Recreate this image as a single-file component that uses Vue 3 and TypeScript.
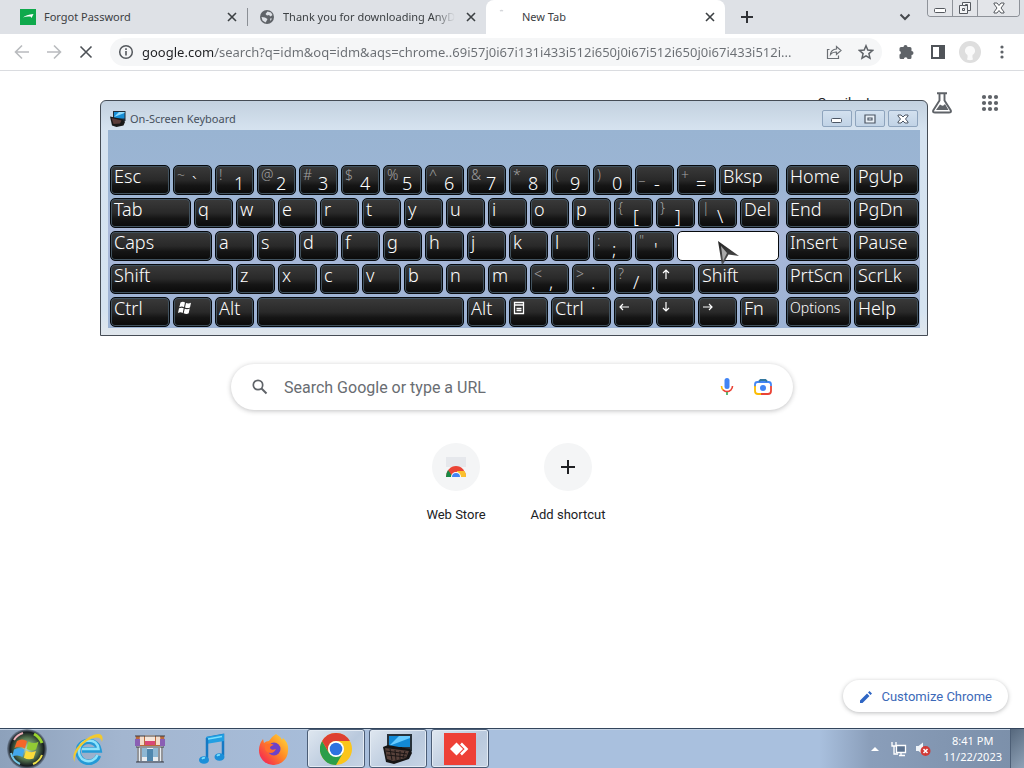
<script setup lang="ts">
import { ref } from 'vue'

interface Key {
  label: string
  span: number
  shifted?: string
  icon?: 'win' | 'menu' | 'up' | 'down' | 'left' | 'right'
  pressed?: boolean
}

const k = (label: string, span = 2): Key => ({ label, span })
const dual = (shifted: string, label: string): Key => ({ label, shifted, span: 2 })
const letters = (s: string): Key[] => s.split('').map((c) => k(c))

const keys: Key[] = [
  k('Esc', 3),
  dual('~', '`'), dual('!', '1'), dual('@', '2'), dual('#', '3'), dual('$', '4'), dual('%', '5'),
  dual('^', '6'), dual('&', '7'), dual('*', '8'), dual('(', '9'), dual(')', '0'), dual('_', '-'), dual('+', '='),
  k('Bksp', 3),
  k('Tab', 4), ...letters('qwertyuiop'), dual('{', '['), dual('}', ']'), dual('|', '\\'), k('Del'),
  k('Caps', 5), ...letters('asdfghjkl'), dual(':', ';'), dual('"', "'"),
  { label: 'Enter', span: 5, pressed: true },
  k('Shift', 6), ...letters('zxcvbnm'), dual('<', ','), dual('>', '.'), dual('?', '/'),
  { label: 'Up', span: 2, icon: 'up' }, k('Shift', 4),
  k('Ctrl', 3), { label: 'Windows', span: 2, icon: 'win' }, k('Alt'), k('', 10), k('Alt'),
  { label: 'Menu', span: 2, icon: 'menu' }, k('Ctrl', 3),
  { label: 'Left', span: 2, icon: 'left' }, { label: 'Down', span: 2, icon: 'down' },
  { label: 'Right', span: 2, icon: 'right' }, k('Fn'),
]
const navKeys = ['Home', 'PgUp', 'End', 'PgDn', 'Insert', 'Pause', 'PrtScn', 'ScrLk', 'Options', 'Help']
const arrows: Record<string, string> = {
  up: 'M6 11V2M3 5l3-3 3 3',
  down: 'M6 1v9M3 7l3 3 3-3',
  left: 'M11 6H2M5 3L2 6l3 3',
  right: 'M1 6h9M7 3l3 3-3 3',
}

const url = ref('google.com/search?q=idm&oq=idm&aqs=chrome..69i57j0i67i131i433i512i650j0i67i512i650j0i67i433i512i...')
const query = ref('')
const dots = [3, 9, 15]
</script>

<template>
  <div class="desktop">
    <div class="browser">
      <header class="tabstrip">
        <div class="tab">
          <svg class="fav" viewBox="0 0 16 16"><rect width="16" height="16" fill="#0fa94c" /><path d="M3 8.500Q6 5.500 13.500 5L11.500 9 10.500 7.500Q6 7 3 8.500Z" fill="#fff" /></svg>
          <span class="tab-title">Forgot Password</span>
          <button class="tab-close" aria-label="Close tab"><svg viewBox="0 0 10 10"><path d="M1 1l8 8M9 1L1 9" /></svg></button>
        </div>
        <div class="tab sep">
          <svg class="fav" viewBox="0 0 16 16"><circle cx="8" cy="8" r="7" fill="#5f6368" /><path d="M8.500 2.500L12 3.500 13.500 6 11.500 7.500 10 6 8 6.500 6.500 5ZM2.500 8L6 8.500 8.500 10 7.500 12 6.500 13.500 3.500 11.500ZM11 9.500l2 0-1.500 2.500Z" fill="#dee1e6" /></svg>
          <span class="tab-title fade">Thank you for downloading AnyD</span>
          <button class="tab-close" aria-label="Close tab"><svg viewBox="0 0 10 10"><path d="M1 1l8 8M9 1L1 9" /></svg></button>
        </div>
        <div class="tab active">
          <svg class="fav" viewBox="0 0 16 16"><path d="M2 2q1.500-1 3 0" fill="none" stroke="#d4d6da" stroke-width="1.500" /></svg>
          <span class="tab-title">New Tab</span>
          <button class="tab-close" aria-label="Close tab"><svg viewBox="0 0 10 10"><path d="M1 1l8 8M9 1L1 9" /></svg></button>
        </div>
        <button class="plain newtab" aria-label="New tab"><svg width="12" height="12" viewBox="0 0 12 12"><path d="M6 0v12M0 6h12" stroke="#303236" stroke-width="2" /></svg></button>
        <button class="plain chevron" aria-label="Search tabs"><svg width="12" height="8" viewBox="0 0 12 8"><path d="M1.500 1.500L6 6l4.500-4.500" fill="none" stroke="#45484c" stroke-width="2" /></svg></button>
        <div class="caption">
          <button aria-label="Minimize"><svg width="12" height="14" viewBox="0 0 12 14"><rect x=".5" y="7.500" width="11" height="4" rx="1" fill="#fff" stroke="#55595f" /></svg></button>
          <button aria-label="Restore"><svg width="14" height="14" viewBox="0 0 14 14"><path d="M4.500 1.500h8v8h-3v3h-8v-8h3zM9.500 9.500v-5h-5M4.500 7.500h2v2h-2zM7.500 4v-.5h2v3h-.5" fill="#f4f5f7" stroke="#55595f" /></svg></button>
          <button aria-label="Close"><svg width="12" height="12" viewBox="0 0 12 12"><path d="M1 1h3l2 2.500L8 1h3v1L8 6l3 4v1H8L6 8.500 4 11H1v-1l3-4-3-4z" fill="#fff" stroke="#55595f" /></svg></button>
        </div>
      </header>

      <nav class="toolbar">
        <button class="tool" aria-label="Back"><svg width="16" height="16" viewBox="0 0 16 16"><path d="M15 8H2M8 1.500L1.500 8 8 14.500" stroke="#b9bbbe" /></svg></button>
        <button class="tool" aria-label="Forward"><svg width="16" height="16" viewBox="0 0 16 16"><path d="M1 8h13M8 1.500L14.500 8 8 14.500" stroke="#b9bbbe" /></svg></button>
        <button class="tool" aria-label="Stop"><svg width="16" height="16" viewBox="0 0 16 16"><path d="M2.500 2.500l11 11M13.500 2.500l-11 11" stroke="#4d5156" /></svg></button>
        <div class="omnibox">
          <svg width="16" height="16" viewBox="0 0 16 16"><circle cx="8" cy="8" r="6.300" fill="none" stroke="#54585d" stroke-width="1.500" /><path d="M8 7v4.500M8 4.300v1.600" stroke="#54585d" stroke-width="1.600" /></svg>
          <input v-model="url" class="url" aria-label="Address" type="text" />
          <button class="plain" aria-label="Share"><svg width="16" height="16" viewBox="0 0 16 16"><path d="M3.500 5.500h-2v9h11v-3M4.500 10.500q.5-5 6-5.500V2.500l4.500 4-4.500 4V8q-4-.2-6 2.500z" fill="none" stroke="#6b6f74" stroke-width="1.200" /></svg></button>
          <button class="plain" aria-label="Bookmark"><svg width="16" height="16" viewBox="0 0 16 16"><path d="M8 1.800l1.800 4.300 4.700.4-3.600 3.100 1.100 4.600L8 11.800l-4 2.400 1.100-4.600L1.500 6.500l4.700-.4z" fill="none" stroke="#5f6368" stroke-width="1.500" /></svg></button>
        </div>
        <button class="tool ext" aria-label="Extensions"><svg width="16" height="16" viewBox="0 0 16 16"><path d="M1.500 4.500Q1.500 3 3 3h2.500a2 2 0 014 0H12q1.500 0 1.500 1.500V7a2 2 0 010 4v2.500Q13.500 15 12 15H9.500a1.800 1.800 0 00-3.600 0H3q-1.500 0-1.500-1.500v-3a1.800 1.800 0 000-3.500z" fill="#5f6368" stroke="none" /></svg></button>
        <button class="tool" aria-label="Side panel"><svg width="16" height="16" viewBox="0 0 16 16"><rect x="2" y="2" width="12" height="12" stroke="#505459" stroke-width="2" /><path d="M9 2h5v12H9z" fill="#505459" stroke="none" /></svg></button>
        <button class="tool" aria-label="Profile"><svg width="22" height="22" viewBox="0 0 22 22"><circle cx="11" cy="11" r="11" fill="#dedede" stroke="none" /><path d="M8 18.500q1-2 .5-4.500Q5.500 12 6 9q1-4 5-4t5 4q.5 3-2.500 5-.5 2.500.5 4.500-3 1.500-6 0z" fill="#fafafa" stroke="none" /></svg></button>
        <button class="tool" aria-label="Menu"><svg width="16" height="16" viewBox="0 0 16 16"><g fill="#5f6368" stroke="none"><circle cx="8" cy="3" r="1.600" /><circle cx="8" cy="8" r="1.600" /><circle cx="8" cy="13" r="1.600" /></g></svg></button>
      </nav>

      <main class="page">
        <div class="links">
          <a href="#">Gmail</a>
          <a href="#">Images</a>
          <button class="plain labs" aria-label="Labs"><svg width="20" height="22" viewBox="0 0 20 22"><path d="M5 1.200h10M7.500 1v7.500L1.200 18.500Q.5 20.500 3 20.500h14q2.500 0 1.800-2L12.500 8.500V1" fill="none" stroke="#5f6368" stroke-width="1.900" /><path d="M4 18l4-5.500q3 2.500 5-.5L16.500 18z" fill="#5f6368" /></svg></button>
          <button class="plain apps" aria-label="Google apps"><svg width="18" height="18" viewBox="0 0 18 18"><g fill="#5f6368"><template v-for="y in dots" :key="y"><circle v-for="x in dots" :key="x" :cx="x" :cy="y" r="2.100" /></template></g></svg></button>
        </div>
        <form class="search" @submit.prevent>
          <svg width="18" height="18" viewBox="0 0 18 18"><circle cx="7" cy="7" r="4.700" fill="none" stroke="#5f6368" stroke-width="1.700" /><path d="M10.500 10.500l5 5" stroke="#5f6368" stroke-width="2" /></svg>
          <input v-model="query" type="text" aria-label="Search" placeholder="Search Google or type a URL" />
          <button class="plain" type="button" aria-label="Search by voice"><svg width="14" height="20" viewBox="0 0 14 20"><rect x="4.500" y="1" width="5" height="11" rx="2.500" fill="#4285f4" /><path d="M1.500 9q0 2.500 1.700 4" fill="none" stroke="#fbbc04" stroke-width="1.600" /><path d="M3 12.800Q7 16.500 11 12.800q1.500-1.500 1.500-3.800" fill="none" stroke="#ea4335" stroke-width="1.600" /><path d="M7 15v3" stroke="#34a853" stroke-width="1.600" /></svg></button>
          <button class="plain" type="button" aria-label="Search by image"><svg width="20" height="20" viewBox="0 0 20 20" fill="none" stroke-width="1.800"><path d="M2 10V7.500Q2 5 4.500 5h11Q18 5 18 7.500V9" stroke="#4285f4" /><path d="M6 4.500L7.500 3h5L14 4.500" stroke="#34789f" /><path d="M2 9v5q0 3 3 3h4" stroke="#fbbc04" /><path d="M18 9v5q0 3-3 3H8" stroke="#ea4335" /><circle cx="10" cy="11" r="3" fill="#4285f4" /></svg></button>
        </form>
        <div class="shortcuts">
          <a href="#" class="shortcut">
            <span class="disc"><svg width="22" height="22" viewBox="0 0 22 22"><path d="M1 1h20v10H1z" fill="#e6e8ec" /><path d="M1 21a10 11 0 0120 0z" fill="#ea4335" /><path d="M1 21q0-4 2-7l5 7z" fill="#188a46" /><path d="M12 15h7.500q1.500 2 1.500 6h-9z" fill="#fbc02d" /><path d="M6 21a5 5 0 0110 0z" fill="#fff" /><path d="M7 21a4 4 0 018 0z" fill="#4285f4" /></svg></span>
            <span>Web Store</span>
          </a>
          <button class="plain shortcut">
            <span class="disc"><svg width="14" height="14" viewBox="0 0 14 14"><path d="M7 0v14M0 7h14" stroke="#202124" stroke-width="2" /></svg></span>
            <span>Add shortcut</span>
          </button>
        </div>
        <button class="customize">
          <svg width="14" height="14" viewBox="0 0 14 14"><path d="M1 10.500V13h2.500l7-7L8 3.500zM9 2.500L11.500 5l1.500-1.500L10.500 1z" fill="#2f66c4" /></svg>
          <span>Customize Chrome</span>
        </button>
      </main>
    </div>

    <section class="osk" aria-label="On-Screen Keyboard">
      <div class="osk-title">
        <svg width="16" height="16" viewBox="0 0 32 32"><path d="M6 0h25v19l-4 4H6z" fill="#222d38" /><path d="M8 2h21v13H8z" fill="#178ed6" /><path d="M8 12L18 2h11v2z" fill="#8fdcff" /><path d="M0 11l24 5 6 6-3 7-14 3-9-3z" fill="#191919" /><path d="M3 14l20 5-3 6-13 1z" fill="#5b3d3a" /></svg>
        <span>On-Screen Keyboard</span>
        <div class="osk-caption">
          <button aria-label="Minimize"><svg width="12" height="12" viewBox="0 0 12 12"><rect x=".5" y="5.500" width="10" height="4" rx="1" fill="#fff" stroke="#4c5664" /></svg></button>
          <button aria-label="Maximize"><svg width="12" height="12" viewBox="0 0 12 12"><path d="M1 2h10v8H1zM4 5h4v2H4z" fill="#e9f0f7" stroke="#4c5664" stroke-width="1.200" /></svg></button>
          <button aria-label="Close"><svg width="12" height="12" viewBox="0 0 12 12"><path d="M1 2h3l2 2 2-2h3v1L8.500 6 11 9v1H8L6 8l-2 2H1V9l2.500-3L1 3z" fill="#fff" stroke="#4c5664" /></svg></button>
        </div>
      </div>
      <div class="osk-body">
        <div class="main-keys">
          <button
            v-for="(key, i) in keys"
            :key="i"
            class="key"
            :class="['s' + key.span, { dual: key.shifted, pressed: key.pressed }]"
            :aria-label="key.label || 'Space'"
          >
            <template v-if="key.icon">
              <svg v-if="key.icon === 'win'" width="16" height="14" viewBox="0 0 16 14"><path d="M3.500 1.500Q6 .2 8 1.500L7 6.200Q5 5 2.300 6.200zM9 2q2.500 1 5-.3L13 6.500Q10.500 7.500 8 6.500zM2 7.300q2.600-1.200 4.700 0L5.700 12Q3.500 10.600 1 12zM7.700 7.800q2.500 1 5-.2l-1 4.700Q9.500 13.500 6.700 12.300z" fill="#fff" /></svg>
              <svg v-else-if="key.icon === 'menu'" width="12" height="14" viewBox="0 0 12 14"><path d="M1.500 1.500h9v11h-9zM1 4h10M3.500 7.500h5M3.500 9.500h5" fill="none" stroke="#fff" stroke-width="1.300" /></svg>
              <svg v-else class="arrow" width="12" height="12" viewBox="0 0 12 12"><path :d="arrows[key.icon]" fill="none" stroke="#fff" stroke-width="1.200" /></svg>
            </template>
            <template v-else-if="!key.pressed">
              <span v-if="key.shifted" class="shifted">{{ key.shifted }}</span>
              <span class="base">{{ key.label }}</span>
            </template>
          </button>
        </div>
        <div class="nav-keys">
          <button v-for="n in navKeys" :key="n" class="key" :class="{ small: n === 'Options' }">{{ n }}</button>
        </div>
      </div>
      <svg class="pointer" width="26" height="28" viewBox="0 0 26 28">
        <defs><linearGradient id="pg" x1="0" y1="0" x2="0" y2="1"><stop offset="0" stop-color="#222" /><stop offset=".6" stop-color="#444" /><stop offset="1" stop-color="#222" stop-opacity=".6" /></linearGradient></defs>
        <path d="M1 1L22 16 11.500 14.500 5 26Z" fill="url(#pg)" /><path d="M4 6l6 7-4 8z" fill="#aaa" />
      </svg>
    </section>

    <footer class="taskbar">
      <button class="start" aria-label="Start">
        <svg width="42" height="40" viewBox="0 0 42 40">
          <defs><radialGradient id="orb"><stop offset="0" stop-color="#b9d8c0" /><stop offset=".55" stop-color="#54754e" /><stop offset=".85" stop-color="#171d20" /><stop offset="1" stop-color="#29313b" stop-opacity=".3" /></radialGradient></defs>
          <circle cx="21" cy="20" r="20" fill="url(#orb)" />
          <path d="M8 11a16 16 0 019-7" stroke="#edb0b8" stroke-width="2" fill="none" /><path d="M28 5a17 17 0 018 9" stroke="#9ad52e" stroke-width="3" fill="none" /><path d="M5 24a16 16 0 009 11" stroke="#74c7e6" stroke-width="2" fill="none" /><path d="M36 26a16 16 0 01-9 9" stroke="#ece04a" stroke-width="2" fill="none" />
          <path d="M11 12q5-3 10 0l-2 7.500q-5-3-10.500-.5z" fill="#f5662a" /><path d="M22.500 12.500q5 3 10 .3L30 20.500q-5 2-9.500-.5z" fill="#92cb35" /><path d="M8 20.500q5-3 10.500 0l-2 7.500q-5-3-10.300-.3z" fill="#43a8eb" /><path d="M20 21.500q5 3 10 .5l-2.500 7.500q-5 2-9.700-.8z" fill="#fbdc3c" />
        </svg>
      </button>
      <button class="task" aria-label="Internet Explorer">
        <svg width="32" height="32" viewBox="0 0 32 32"><path d="M26.500 22.500A10.500 10.500 0 1127 17H10" fill="none" stroke="#249ad6" stroke-width="5.500" /><path d="M25.500 22A9.500 9.500 0 117.500 15q2-7 9-7.500 9 0 10 8.500H10" fill="none" stroke="#8fe3fb" stroke-width="2.500" /><path d="M3 29Q-2 22 8 11 20 0 27 1q5 1 3 8-1-5-6-4.500-8 1-16 10Q1 24 3 29z" fill="#f2c92f" /></svg>
      </button>
      <button class="task" aria-label="Store">
        <svg width="32" height="30" viewBox="0 0 32 30"><path d="M3 11h26v16H3z" fill="#e9edf0" /><path d="M2 2h28l1 10H1z" fill="#b96a3c" /><path d="M6 2h4v9H5zM22 2h4l1 9h-5z" fill="#f3dccb" /><path d="M11 1h10v6H11z" fill="#f5e6da" /><path d="M11 7h10v4H11z" fill="#d94877" /><path d="M1 5h5v7H1zM26 5h5v7h-5z" fill="#8a5fb4" /><path d="M8 14h5v9H8zM19 14h5v9h-5z" fill="#8eb7d3" /><path d="M13 15h6v12h-6z" fill="#4f87ae" /><path d="M1 2h30M2 13h28M2 28h28M4 13v15M7 14v13M25 14v13M28 13v15" stroke="#3c3c42" /></svg>
      </button>
      <button class="task" aria-label="Music">
        <svg width="28" height="32" viewBox="0 0 28 32"><path d="M9 5L25 2v20.500" fill="none" stroke="#1679c4" stroke-width="2.500" /><path d="M8 4l18-3v7L8 11z" fill="#229fe2" /><path d="M9 5v21" stroke="#1679c4" stroke-width="2.500" /><ellipse cx="6" cy="27" rx="5" ry="3.800" fill="#1b8fd9" /><ellipse cx="21.500" cy="24" rx="5" ry="3.800" fill="#1b8fd9" /><path d="M10 6l14-2.500M4 26q1-1.500 3-1M19 23q1-1.500 3-1" stroke="#7be0ff" stroke-width="1.500" fill="none" /></svg>
      </button>
      <button class="task" aria-label="Firefox">
        <svg width="32" height="32" viewBox="0 0 32 32"><defs><linearGradient id="ff" x1="1" y1="0" x2="0" y2="1"><stop offset="0" stop-color="#ffe23d" /><stop offset=".45" stop-color="#ff8a25" /><stop offset=".8" stop-color="#f83a48" /><stop offset="1" stop-color="#e32a7b" /></linearGradient></defs><path d="M18 1q4 2 6 6l1-2q6 5 5 13A14.500 14.500 0 011 17Q1 11 5 6l1 4Q8 8 11 8q2-4 7-7z" fill="url(#ff)" /><circle cx="16" cy="16" r="6.500" fill="#6d42c8" /><path d="M7 12q5-3 9 0-4 1-4 3 1 3 6 1-3 6-9 3-3-3-2-7z" fill="#ff6f2b" /></svg>
      </button>
      <button class="task open" aria-label="Chrome">
        <svg width="32" height="32" viewBox="0 0 32 32"><circle cx="16" cy="16" r="16" fill="#fbc51b" /><path d="M2.140 8L9.070 20 16 24 22.930 20 16 32A16 16 0 012.140 8z" fill="#2b9e4a" /><path d="M2.140 8A16 16 0 0129.860 8H16A8 8 0 009.070 20z" fill="#de4032" /><circle cx="16" cy="16" r="8" fill="#fff" /><circle cx="16" cy="16" r="6.300" fill="#2f73e0" /></svg>
      </button>
      <button class="task open" aria-label="On-Screen Keyboard">
        <svg width="32" height="32" viewBox="0 0 32 32"><path d="M5 1h25v17l-5 5-20-6z" fill="#28323a" /><path d="M7 3h21v11H7z" fill="#128ad6" /><path d="M7 13L17 3h11v2z" fill="#67cbff" /><path d="M12 14h8v3h-8z" fill="#151718" /><path d="M1 14l5-2 22 4 2 4-3 6-15 5-8-2z" fill="#161515" /><path d="M3 15l24 3-3 7-13 3-6-2z" fill="#57413a" /><path d="M4 18l21 3M5 22l19 2M8 16l2 11M13 17l1 10M18 18l0 8M23 18l-2 7" stroke="#1c1716" /></svg>
      </button>
      <button class="task open" aria-label="AnyDesk">
        <svg width="32" height="32" viewBox="0 0 32 32"><path d="M0 0h32v32H0z" fill="#ee4036" /><path d="M6 16l6.500-6.500L19 16l-6.500 6.500z" fill="#fff" /><path d="M17 10.500l5.500 5.500-5.500 5.500" fill="none" stroke="#fff" stroke-width="2.600" /></svg>
      </button>
      <div class="tray">
        <button class="plain" aria-label="Show hidden icons"><svg width="8" height="5" viewBox="0 0 8 5"><path d="M0 5l4-4 4 4z" fill="#fff" /></svg></button>
        <svg width="16" height="16" viewBox="0 0 16 16"><path d="M5.500 4.500h9v7h-9zM8 14.500h6M10 12v2" fill="#5d7390" stroke="#fff" stroke-width="1.300" /><path d="M1 1v4h4V1M3 5v8h4" fill="none" stroke="#fff" stroke-width="1.300" /></svg>
        <svg width="16" height="16" viewBox="0 0 16 16"><path d="M1 5h2.500L8 1.500v12L3.500 10H1z" fill="#eef3f8" /><circle cx="10.500" cy="10" r="5" fill="#d13a36" /><path d="M8.500 8l4 4M12.500 8l-4 4" stroke="#fff" stroke-width="1.500" /></svg>
        <div class="clock"><span>8:41 PM</span><span>11/22/2023</span></div>
        <button class="peek" aria-label="Show desktop"></button>
      </div>
    </footer>
  </div>
</template>

<style>
body { margin: 0; }
</style>

<style scoped>
* { box-sizing: border-box; }
button, input { font: inherit; color: inherit; }
svg { display: block; flex: none; }
.desktop {
  position: relative;
  display: flex;
  flex-direction: column;
  height: 100vh;
  overflow: hidden;
  font: 11px/16px "Noto Sans", "Open Sans", sans-serif;
  color: #3c4043;
  background: #fff;
}
.browser { flex: 1; min-height: 0; display: flex; flex-direction: column; }
.plain { border: 0; background: none; padding: 0; display: grid; place-items: center; }

.tabstrip { display: flex; height: 34px; padding-left: 8px; background: #dee1e6; }
.tab { flex: 0 1 239px; min-width: 0; display: flex; align-items: center; gap: 8px; padding: 0 7px 0 12px; }
.tab.sep { position: relative; }
.tab.sep::before { content: ""; position: absolute; left: 0; top: 8px; height: 18px; width: 1px; background: #8b8f95; }
.tab.active { background: #fff; border-radius: 8px 8px 0 0; }
.fav { width: 16px; height: 16px; }
.tab-title { flex: 1; overflow: hidden; white-space: nowrap; }
.tab-title.fade { mask-image: linear-gradient(to right, #000 88%, transparent); }
.tab-close { width: 16px; height: 16px; border: 0; background: none; padding: 3px; }
.tab-close svg { width: 10px; height: 10px; stroke: #3c4043; stroke-width: 1.600; }
.newtab { width: 28px; margin-left: 8px; }
.chevron { width: 24px; margin-left: auto; margin-right: 10px; }
.caption { display: flex; height: 17px; margin-right: 4px; border: 1px solid #8e9299; border-top: 0; border-radius: 0 0 4px 4px; overflow: hidden; }
.caption button { width: 25px; border: 0; border-right: 1px solid #8e9299; background: #e3e5e9; padding: 0; display: grid; place-items: center; }
.caption button:last-child { width: 41px; border-right: 0; }

.toolbar { display: flex; align-items: center; height: 37px; padding: 0 6px; background: #fff; border-bottom: 1px solid #dadce0; }
.tool { width: 32px; height: 32px; padding: 0; border: 0; background: none; display: grid; place-items: center; }
.tool svg { fill: none; stroke-width: 1.600; }
.tool.ext { margin-left: 8px; }
.omnibox { flex: 1; display: flex; align-items: center; gap: 16px; height: 28px; margin-left: 8px; padding: 0 8px; border-radius: 14px; background: #f5f6f7; }
.url {
  flex: 1; min-width: 0; margin-left: -8px; padding: 0; border: 0; outline: 0;
  font-size: 13px; line-height: 20px; color: transparent; caret-color: #202124;
  background: linear-gradient(to right, #202124 73px, #6a6e73 73px) text;
}

.page { position: relative; flex: 1; display: flex; flex-direction: column; align-items: center; font-family: Roboto, sans-serif; font-size: 13px; color: #202124; }
.links { align-self: stretch; display: flex; align-items: center; justify-content: flex-end; height: 64px; padding-right: 25px; }
.links a { margin-right: 15px; color: #202124; text-decoration: none; }
.labs { margin: 0 29px 0 8px; }
.search { display: flex; align-items: center; gap: 15px; width: 562px; max-width: 90%; height: 46px; margin-top: 229px; padding: 0 20px; border-radius: 23px; background: #fff; box-shadow: 0 1px 5px rgba(32, 33, 36, .28); }
.search input { flex: 1; min-width: 0; padding: 0; border: 0; outline: 0; background: none; font-size: 16px; }
.search input::placeholder { color: #696d72; opacity: 1; }
.search button:last-child { margin-left: 4px; }
.shortcuts { display: flex; margin-top: 33px; }
.shortcut { width: 112px; display: flex; flex-direction: column; align-items: center; gap: 16px; color: #202124; text-decoration: none; }
.disc { display: grid; place-items: center; width: 48px; height: 48px; border-radius: 50%; background: #f4f5f6; }
.customize { position: absolute; right: 16px; bottom: 16px; display: flex; align-items: center; gap: 8px; height: 32px; padding: 1px 16px 0; border: 0; border-radius: 16px; background: #fff; color: #3c69b8; box-shadow: 0 1px 4px rgba(60, 64, 67, .35); }

.osk { position: absolute; left: 100px; right: 96px; top: 100px; padding: 0 7px 7px; border: 1px solid #454c55; border-radius: 6px 6px 0 0; background: linear-gradient(#c3d1df, #d5e2ef 28px, #d5e3f0 90%, #e0e6ec); }
.osk-title { display: flex; align-items: center; gap: 4px; height: 29px; padding: 6px 2px 0; color: #46505c; }
.osk-caption { display: flex; gap: 3px; margin-left: auto; }
.osk-caption button { width: 30px; height: 17px; padding: 0; border: 1px solid #8ea4bd; border-radius: 2px; background: linear-gradient(#d3e1ef, #c1d3e6); display: grid; place-items: center; }
.osk-body { display: grid; grid-template-columns: 1fr 133px; gap: 7px; padding: 35px 1px 1px 2px; background: linear-gradient(#99b4d2, #9cb5d4 30%, #abb9d9 50%, #9bb2d3); }
.main-keys, .nav-keys { display: grid; grid-auto-rows: 30px; gap: 3px; }
.main-keys { grid-template-columns: repeat(32, 1fr); }
.nav-keys { grid-template-columns: 1fr 1fr; }
.key {
  display: flex; align-items: flex-start; min-width: 0; padding: 0 0 0 3px; overflow: hidden;
  border: 1px solid #06090d; border-radius: 5px; color: #fff; white-space: nowrap;
  font-size: 18px; font-weight: 300; line-height: 20px; text-align: left;
  background: linear-gradient(#3a3a3a, #292929 50%, #151515 70%, #0a0a0a);
  box-shadow: inset 0 0 0 1px #42535f;
}
.key.small { font-size: 14px; line-height: 20px; }
.key svg { margin-top: 3px; }
.key.dual { display: grid; grid-template-columns: 15px 1fr; }
.shifted { font-size: 14px; line-height: 18px; color: #a2a2a2; }
.base { min-width: 0; }
.dual .base { margin-top: 7px; }
.key.pressed { background: #fff; box-shadow: none; }
.s2 { grid-column: span 2; }
.s3 { grid-column: span 3; }
.s4 { grid-column: span 4; }
.s5 { grid-column: span 5; }
.s6 { grid-column: span 6; }
.s10 { grid-column: span 10; }
.pointer { position: absolute; left: 616px; top: 139px; }

.taskbar { display: flex; align-items: stretch; gap: 4px; height: 40px; border-top: 1px solid #33455c; background: linear-gradient(to right, #8da1bb, #a3b6d0 12%, #a9c0de 40%, #a9c0de 80%, #8a9eba 85%, #8296b1 92%, #7b8fa9); box-shadow: inset 0 1px #c3d2e4; }
.start { width: 55px; padding: 0 0 0 6px; border: 0; background: none; }
.task { width: 58px; padding: 0; border: 0; background: none; display: grid; place-items: center; }
.task.open { border: 1px solid #4b5d76; border-radius: 3px; background: linear-gradient(135deg, #dfe7f0, #b9c9dd 60%, #c7d4e4); box-shadow: inset 0 0 0 1px #e3ebf4; }
.tray { display: flex; align-items: center; gap: 8px; margin-left: auto; color: #fff; }
.tray .plain { margin-right: 4px; }
.clock { display: flex; flex-direction: column; align-items: center; margin-left: 4px; }
.peek { align-self: stretch; width: 14px; padding: 0; border: 1px solid #4d5f76; border-width: 0 0 0 1px; background: linear-gradient(135deg, #56687d, #8fa2b7); }
</style>
